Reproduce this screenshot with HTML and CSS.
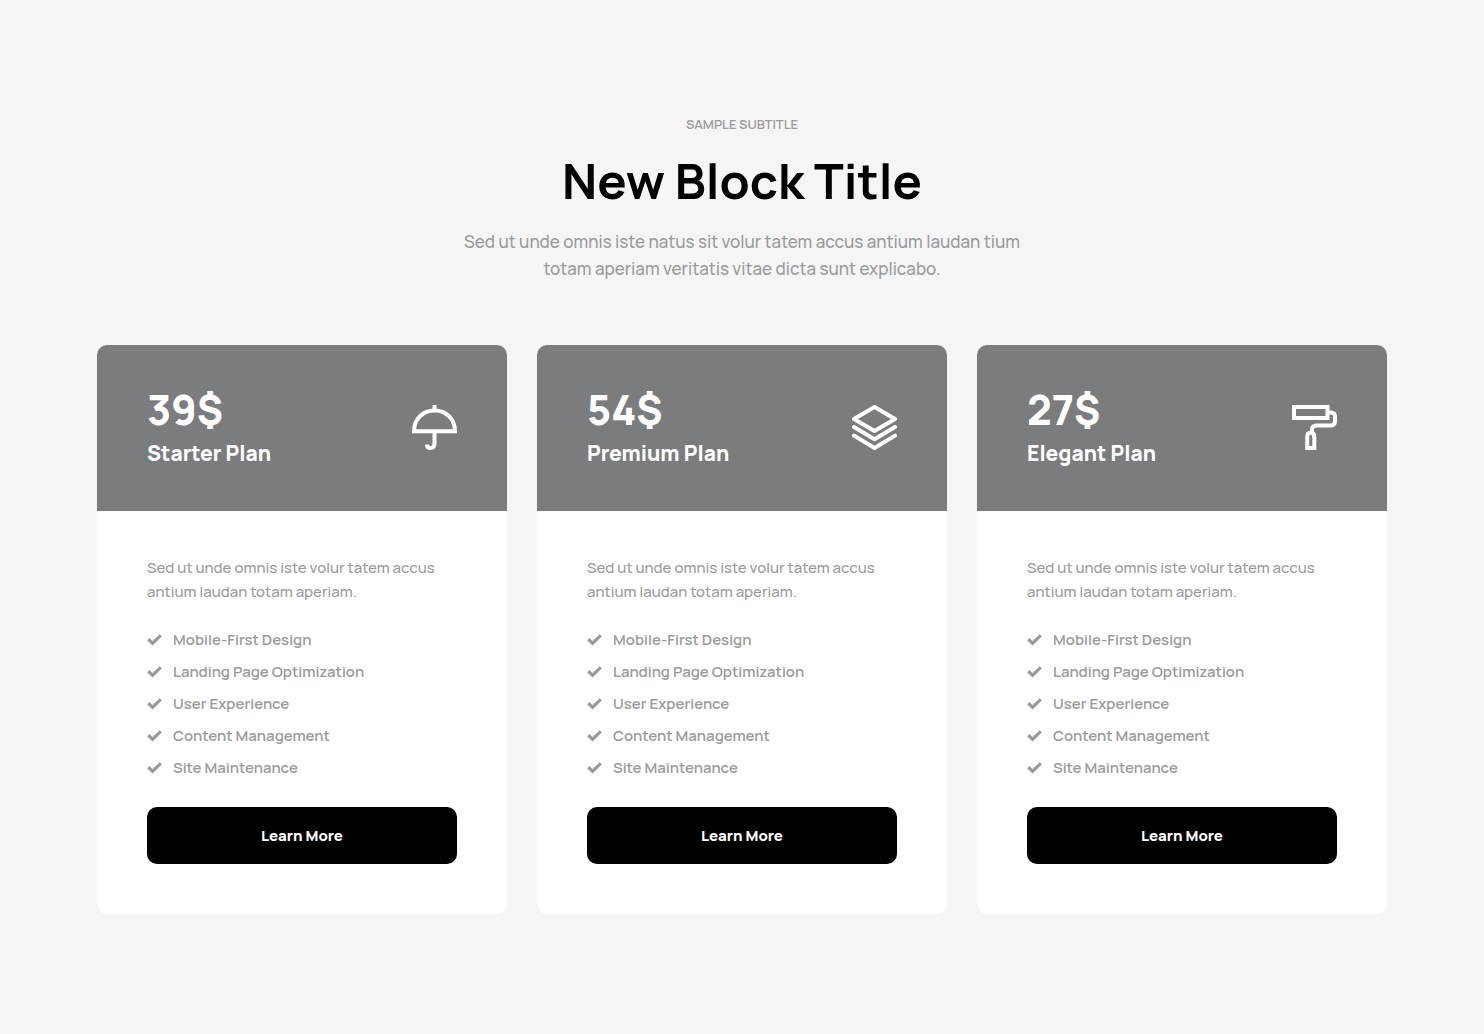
FILE: index.html
```html
<!DOCTYPE html>
<html lang="en">
<head>
<meta charset="utf-8">
<meta name="viewport" content="width=device-width, initial-scale=1">
<title>New Block Title</title>
<link rel="stylesheet" href="styles.css">
</head>
<body>
<svg class="sprite" aria-hidden="true">
  <symbol id="check" viewBox="0 0 15 14"><path d="M1.200 6.200 5.500 10.200 13.800 2.400" fill="none" stroke="currentColor" stroke-width="3.200"/></symbol>
</svg>
<main class="pricing">
  <header class="intro">
    <p class="subtitle">SAMPLE SUBTITLE</p>
    <h1 class="title">New Block Title</h1>
    <p class="lead">Sed ut unde omnis iste natus sit volur tatem accus antium laudan tium<br>totam aperiam veritatis vitae dicta sunt explicabo.</p>
  </header>
  <div class="plans">
    <article class="card">
      <div class="card-head">
        <div>
          <p class="price">39$</p>
          <h2 class="plan">Starter Plan</h2>
        </div>
        <svg class="icon" viewBox="0 0 45 45" aria-hidden="true" fill="none" stroke="currentColor" stroke-width="4">
          <path d="M22.500 0V5M2 26.200C2 14 11 5.500 22.500 5.500S43 14 43 26.200ZM22.500 27V38.500C22.500 41.500 21 43 18.600 43C16.400 43 15 41.800 15 39.500"/>
        </svg>
      </div>
      <div class="card-body">
        <p class="text">Sed ut unde omnis iste volur tatem accus antium laudan totam aperiam.</p>
        <ul class="features">
          <li><svg class="check"><use href="#check"/></svg>Mobile-First Design</li>
          <li><svg class="check"><use href="#check"/></svg>Landing Page Optimization</li>
          <li><svg class="check"><use href="#check"/></svg>User Experience</li>
          <li><svg class="check"><use href="#check"/></svg>Content Management</li>
          <li><svg class="check"><use href="#check"/></svg>Site Maintenance</li>
        </ul>
        <button class="button" type="button">Learn More</button>
      </div>
    </article>
    <article class="card">
      <div class="card-head">
        <div>
          <p class="price">54$</p>
          <h2 class="plan">Premium Plan</h2>
        </div>
        <svg class="icon" viewBox="0 0 45 45" aria-hidden="true" fill="none" stroke="currentColor" stroke-width="4" stroke-linejoin="round" stroke-linecap="round">
          <path d="M22.500 2 43 14 22.500 26 2 14Z"/>
          <path d="M2 22 22.500 34.300 43 22M2 30.600 22.500 43 43 30.600"/>
        </svg>
      </div>
      <div class="card-body">
        <p class="text">Sed ut unde omnis iste volur tatem accus antium laudan totam aperiam.</p>
        <ul class="features">
          <li><svg class="check"><use href="#check"/></svg>Mobile-First Design</li>
          <li><svg class="check"><use href="#check"/></svg>Landing Page Optimization</li>
          <li><svg class="check"><use href="#check"/></svg>User Experience</li>
          <li><svg class="check"><use href="#check"/></svg>Content Management</li>
          <li><svg class="check"><use href="#check"/></svg>Site Maintenance</li>
        </ul>
        <button class="button" type="button">Learn More</button>
      </div>
    </article>
    <article class="card">
      <div class="card-head">
        <div>
          <p class="price">27$</p>
          <h2 class="plan">Elegant Plan</h2>
        </div>
        <svg class="icon" viewBox="0 0 45 45" aria-hidden="true" fill="none" stroke="currentColor" stroke-width="4">
          <path d="M2 2H35.500V13H2ZM36 7.500H39C41.500 7.500 43 9 43 11.500V16C43 19 41.500 20.500 38.500 20.500H24.500C21.500 20.500 20 22 20 24.500V27M15.200 43V32C15.200 29 16.500 27.500 18.700 27.500S22.300 29 22.300 32V43Z"/>
        </svg>
      </div>
      <div class="card-body">
        <p class="text">Sed ut unde omnis iste volur tatem accus antium laudan totam aperiam.</p>
        <ul class="features">
          <li><svg class="check"><use href="#check"/></svg>Mobile-First Design</li>
          <li><svg class="check"><use href="#check"/></svg>Landing Page Optimization</li>
          <li><svg class="check"><use href="#check"/></svg>User Experience</li>
          <li><svg class="check"><use href="#check"/></svg>Content Management</li>
          <li><svg class="check"><use href="#check"/></svg>Site Maintenance</li>
        </ul>
        <button class="button" type="button">Learn More</button>
      </div>
    </article>
  </div>
</main>
</body>
</html>
```
FILE: styles.css
```css
* { box-sizing: border-box; }
body {
  margin: 0;
  background: #f5f5f5;
  color: #9b9b9b;
  font-family: Manrope, Inter, "Liberation Sans", sans-serif;
}
h1, h2, p, ul { margin: 0; padding: 0; }
.sprite { display: none; }
.pricing {
  max-width: 1330px;
  margin: 0 auto;
  padding: 114px 20px 120px;
}
.intro { text-align: center; margin-bottom: 63px; }
.subtitle { font-size: 13px; line-height: 20px; font-weight: 600; }
.title {
  margin: 17px 0;
  color: #000;
  font-size: 49px;
  line-height: 60px;
  font-weight: 700;
}
.lead { font-size: 17px; line-height: 27px; font-weight: 500; }
.plans {
  display: grid;
  grid-template-columns: repeat(auto-fit, minmax(320px, 1fr));
  gap: 30px;
}
.card { background: #fff; border-radius: 10px; overflow: hidden; }
.card-head {
  display: flex;
  align-items: center;
  justify-content: space-between;
  padding: 42px 50px 43px;
  background: #7b7c7d;
  color: #fff;
}
.price { font-size: 41px; line-height: 44px; font-weight: 800; }
.plan { margin-top: 7px; font-size: 21px; line-height: 30px; font-weight: 800; }
.icon { width: 45px; height: 45px; flex: none; }
.card-body { padding: 45px 50px 50px; }
.text { font-size: 15px; line-height: 24px; font-weight: 500; }
.features {
  display: grid;
  gap: 8px;
  margin: 24px 0 27px;
  list-style: none;
  font-size: 15px;
  line-height: 24px;
  font-weight: 600;
}
.features li { display: flex; align-items: center; gap: 11px; }
.check { width: 15px; height: 14px; flex: none; }
.button {
  display: block;
  width: 100%;
  padding: 18px;
  border: 0;
  border-radius: 10px;
  background: #000;
  color: #fff;
  font: inherit;
  font-size: 15px;
  line-height: 21px;
  font-weight: 800;
  cursor: pointer;
}
```
